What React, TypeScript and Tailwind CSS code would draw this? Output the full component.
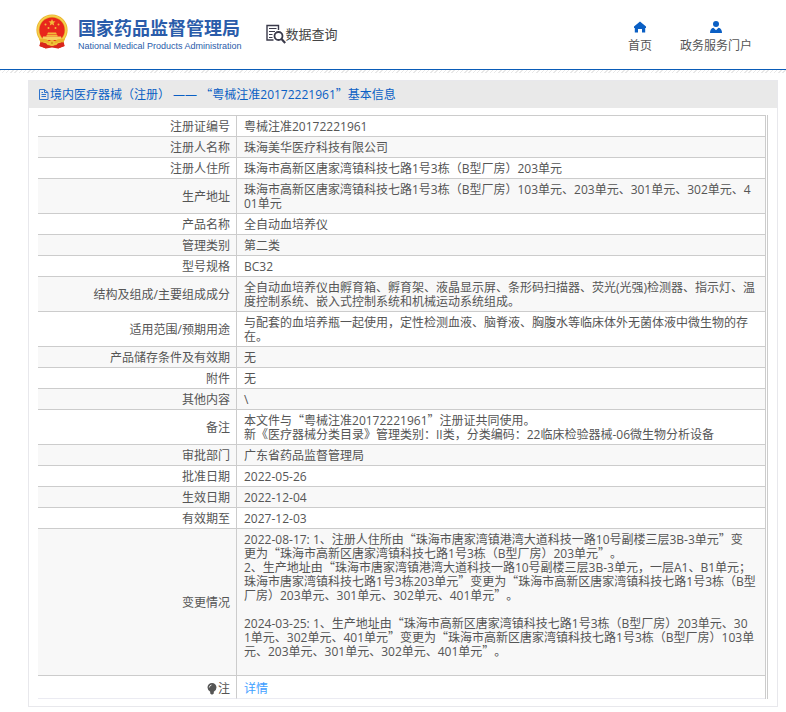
import React from 'react';

interface InfoRow {
  label: string;
  value: string;
}

const ROWS: InfoRow[] = [
  { label: '注册证编号', value: '粤械注准20172221961' },
  { label: '注册人名称', value: '珠海美华医疗科技有限公司' },
  { label: '注册人住所', value: '珠海市高新区唐家湾镇科技七路1号3栋（B型厂房）203单元' },
  { label: '生产地址', value: '珠海市高新区唐家湾镇科技七路1号3栋（B型厂房）103单元、203单元、301单元、302单元、4\n01单元' },
  { label: '产品名称', value: '全自动血培养仪' },
  { label: '管理类别', value: '第二类' },
  { label: '型号规格', value: 'BC32' },
  { label: '结构及组成/主要组成成分', value: '全自动血培养仪由孵育箱、孵育架、液晶显示屏、条形码扫描器、荧光(光强)检测器、指示灯、温度控制系统、嵌入式控制系统和机械运动系统组成。' },
  { label: '适用范围/预期用途', value: '与配套的血培养瓶一起使用，定性检测血液、脑脊液、胸腹水等临床体外无菌体液中微生物的存在。' },
  { label: '产品储存条件及有效期', value: '无' },
  { label: '附件', value: '无' },
  { label: '其他内容', value: '\\' },
  { label: '备注', value: '本文件与“粤械注准20172221961”注册证共同使用。\n新《医疗器械分类目录》管理类别：II类，分类编码：22临床检验器械-06微生物分析设备' },
  { label: '审批部门', value: '广东省药品监督管理局' },
  { label: '批准日期', value: '2022-05-26' },
  { label: '生效日期', value: '2022-12-04' },
  { label: '有效期至', value: '2027-12-03' },
  {
    label: '变更情况',
    value:
      '2022-08-17: 1、注册人住所由“珠海市唐家湾镇港湾大道科技一路10号副楼三层3B-3单元”变\n更为“珠海市高新区唐家湾镇科技七路1号3栋（B型厂房）203单元”。\n' +
      '2、生产地址由“珠海市唐家湾镇港湾大道科技一路10号副楼三层3B-3单元，一层A1、B1单元；珠海市唐家湾镇科技七路1号3栋203单元”变更为“珠海市高新区唐家湾镇科技七路1号3栋（B型厂房）203单元、301单元、302单元、401单元”。\n\n' +
      '2024-03-25: 1、生产地址由“珠海市高新区唐家湾镇科技七路1号3栋（B型厂房）203单元、30\n1单元、302单元、401单元”变更为“珠海市高新区唐家湾镇科技七路1号3栋（B型厂房）103单元、203单元、301单元、302单元、401单元”。\n\n',
  },
];

// Curly quotes take the full-width Chinese form
const Zh = ({ text }: { text: string }) => (
  <>
    {text.split(/([“”])/).map((part, i) =>
      i % 2 ? <span key={i} className="font-['Noto_Sans_CJK_SC',sans-serif] leading-[10px]">{part}</span> : part
    )}
  </>
);

const Emblem = () => (
  <svg width="32" height="36" viewBox="0 0 32 36" aria-hidden="true">
    <path d="M5 24 L3.500 32 L10 34.500 L16 33.500 L22 34.500 L28.500 32 L27 24Z" fill="#d9261c" />
    <circle cx="16" cy="16" r="15.6" fill="#e9b52c" />
    <circle cx="16" cy="16" r="14" fill="none" stroke="#f5cf4e" strokeWidth="1.5" />
    <circle cx="16" cy="16" r="12.600" fill="#e8261c" />
    <path d="M16 5l1 2.300 2.500.2-1.900 1.600.6 2.400L16 10.200l-2.200 1.300.6-2.400-1.900-1.600 2.500-.2z" fill="#f3b93a" />
    <g fill="#f3b93a">
      <circle cx="9.500" cy="10.500" r="1" />
      <circle cx="22.500" cy="10.500" r="1" />
      <circle cx="12.500" cy="14" r="1" />
      <circle cx="19.500" cy="14" r="1" />
      <path d="M12 18.500h8l1 2H11zM10.500 21h11v1.500h-11z" />
    </g>
    <path d="M7 22.500h18l1 3.500H6z" fill="#f6cf60" />
    <path d="M3 25q7-1 10 2h6q3-3 10-2l-1.500 3.500q-5-1.500-7.500 1h-8q-2.500-2.500-7.500-1z" fill="#e9b52c" />
    <path d="M4.500 29q4-1 6.500 1l-1 4.500-6.500-2.500zM27.500 29q-4-1-6.500 1l1 4.500 6.500-2.500z" fill="#d9261c" />
    <circle cx="16" cy="29" r="3" fill="#f0c23a" />
    <circle cx="16" cy="29" r="1.200" fill="#d99a22" />
  </svg>
);

const SearchDocIcon = () => (
  <svg width="20" height="20" viewBox="0 0 20 20" fill="none" stroke="#3a3a4a" aria-hidden="true">
    <path d="M7.500 16H1V1.500h11.500V6" strokeWidth="1.400" />
    <path d="M3 4.500h7.500M3 7.500h6M3 10.500h3.500M3 13.500h3.500" />
    <circle cx="12.500" cy="12" r="4" strokeWidth="1.800" />
    <path d="M15.500 15l3.700 4" strokeWidth="2.200" />
  </svg>
);

const HomeIcon = () => (
  <svg width="12" height="12" viewBox="0 0 12 12" fill="#0a5fc4" aria-hidden="true">
    <path d="M6 .5L0 5.500V7h.8v4.500H4V8h4v3.500h3.200V7h.8V5.500z" />
  </svg>
);

const UserIcon = () => (
  <svg width="12" height="12" viewBox="0 0 12 12" fill="#0a5fc4" aria-hidden="true">
    <circle cx="6" cy="3" r="3" />
    <path d="M0 12Q0 7.500 3.500 6.800L6 9.200l2.500-2.400Q12 7.500 12 12z" />
  </svg>
);

const DocIcon = () => (
  <svg width="12" height="11" viewBox="0 0 12 11" fill="none" stroke="#2f74cc" aria-hidden="true">
    <path d="M1.500 .5h5l3.500 3v7H1.500zM6.500 .5v3H10M3.500 3.500h1.500M3.500 5.500h4.500M3.500 7.500h4.500" />
  </svg>
);

const BulbIcon = () => (
  <svg width="10" height="12" viewBox="0 0 10 12" aria-hidden="true">
    <path d="M5 0a4.500 4.500 0 0 1 4.500 4.500Q9.500 7 6.800 8.800V10.500L5.500 11.500h-1L3.200 10.500V8.800Q.5 7 .5 4.500A4.500 4.500 0 0 1 5 0z" fill="#555" />
    <path d="M2.300 4.500Q2.500 2.300 4.500 2" stroke="#ddd" fill="none" />
  </svg>
);

const LABEL_CELL = 'border-t border-r border-[#ccc] pr-[6px] text-right font-normal align-middle';
const VALUE_CELL = 'border-t border-t-[#ccc] pl-[7px] pr-[6px]';

export default function App() {
  return (
    <div className="bg-white font-['Open_Sans','Noto_Sans_CJK_SC',sans-serif] text-[12px] leading-[14px] text-[#555] [text-spacing-trim:space-all]">
      <header>
        <div className="flex h-[69px] items-start justify-between pt-[14px] pr-[34px] pl-9">
          <div className="flex items-start">
            <a href="#" className="flex items-start gap-[10px] text-[#2a5caa]">
              <Emblem />
              <span className="flex flex-col gap-[3px] pt-[3px]">
                <span className="font-['Noto_Sans_CJK_SC',sans-serif] text-[18px] leading-[20px] font-bold whitespace-nowrap">国家药品监督管理局</span>
                <span className="font-['Liberation_Sans',sans-serif] text-[9px] leading-[12px] whitespace-nowrap">National Medical Products Administration</span>
              </span>
            </a>
            <a href="#" className="ml-6 flex items-center pt-[10px] text-[13px] text-[#444]">
              <SearchDocIcon />
              数据查询
            </a>
          </div>
          <nav className="flex gap-7 pt-[7px]">
            <a href="#" className="flex flex-col items-center gap-[6px]">
              <HomeIcon />
              首页
            </a>
            <a href="#" className="flex flex-col items-center gap-[6px]">
              <UserIcon />
              政务服务门户
            </a>
          </nav>
        </div>
        <div className="h-px bg-[#0a5cb8]" />
        <div className="h-[3px] bg-[repeating-linear-gradient(135deg,#e8e8e8_0,#e8e8e8_1px,#fff_1px,#fff_3px)]" />
      </header>

      <main className="mt-[7px] mr-2 ml-7 border border-[#e8e8ec]">
        <h1 className="flex h-[27px] items-center bg-[#e9e9e9] pl-[9px] text-[#0a5fc4]">
          <DocIcon />
          <span><Zh text="境内医疗器械（注册） —— “粤械注准20172221961”基本信息" /></span>
        </h1>
        <div className="mt-[7px] mr-[9px] mb-[7px] ml-[9px] border-r border-[#ccc] pr-px">
          <table className="w-full table-fixed border-separate border-spacing-0 border-r border-[#ccc]">
            <colgroup>
              <col className="w-[199px]" />
              <col />
            </colgroup>
            <tbody>
              {ROWS.map((row) => (
                <tr key={row.label} className="odd:bg-white even:bg-[#f8f8f8]">
                  <th scope="row" className={`${LABEL_CELL} pt-1 pb-[2px]`}>{row.label}</th>
                  <td className={`${VALUE_CELL} pt-1 pb-[2px] break-all whitespace-pre-line`}>
                    <Zh text={row.value} />
                  </td>
                </tr>
              ))}
              <tr>
                <th scope="row" className={`${LABEL_CELL} border-b border-b-[#ebebf2] pt-[6px] pb-[2px]`}>
                  <span className="flex items-center justify-end gap-px"><BulbIcon />注</span>
                </th>
                <td className={`${VALUE_CELL} border-b border-b-[#ebebf2] pt-[6px] pb-[2px]`}>
                  <a href="#" className="text-[#409eff]">详情</a>
                </td>
              </tr>
            </tbody>
          </table>
        </div>
      </main>
    </div>
  );
}
